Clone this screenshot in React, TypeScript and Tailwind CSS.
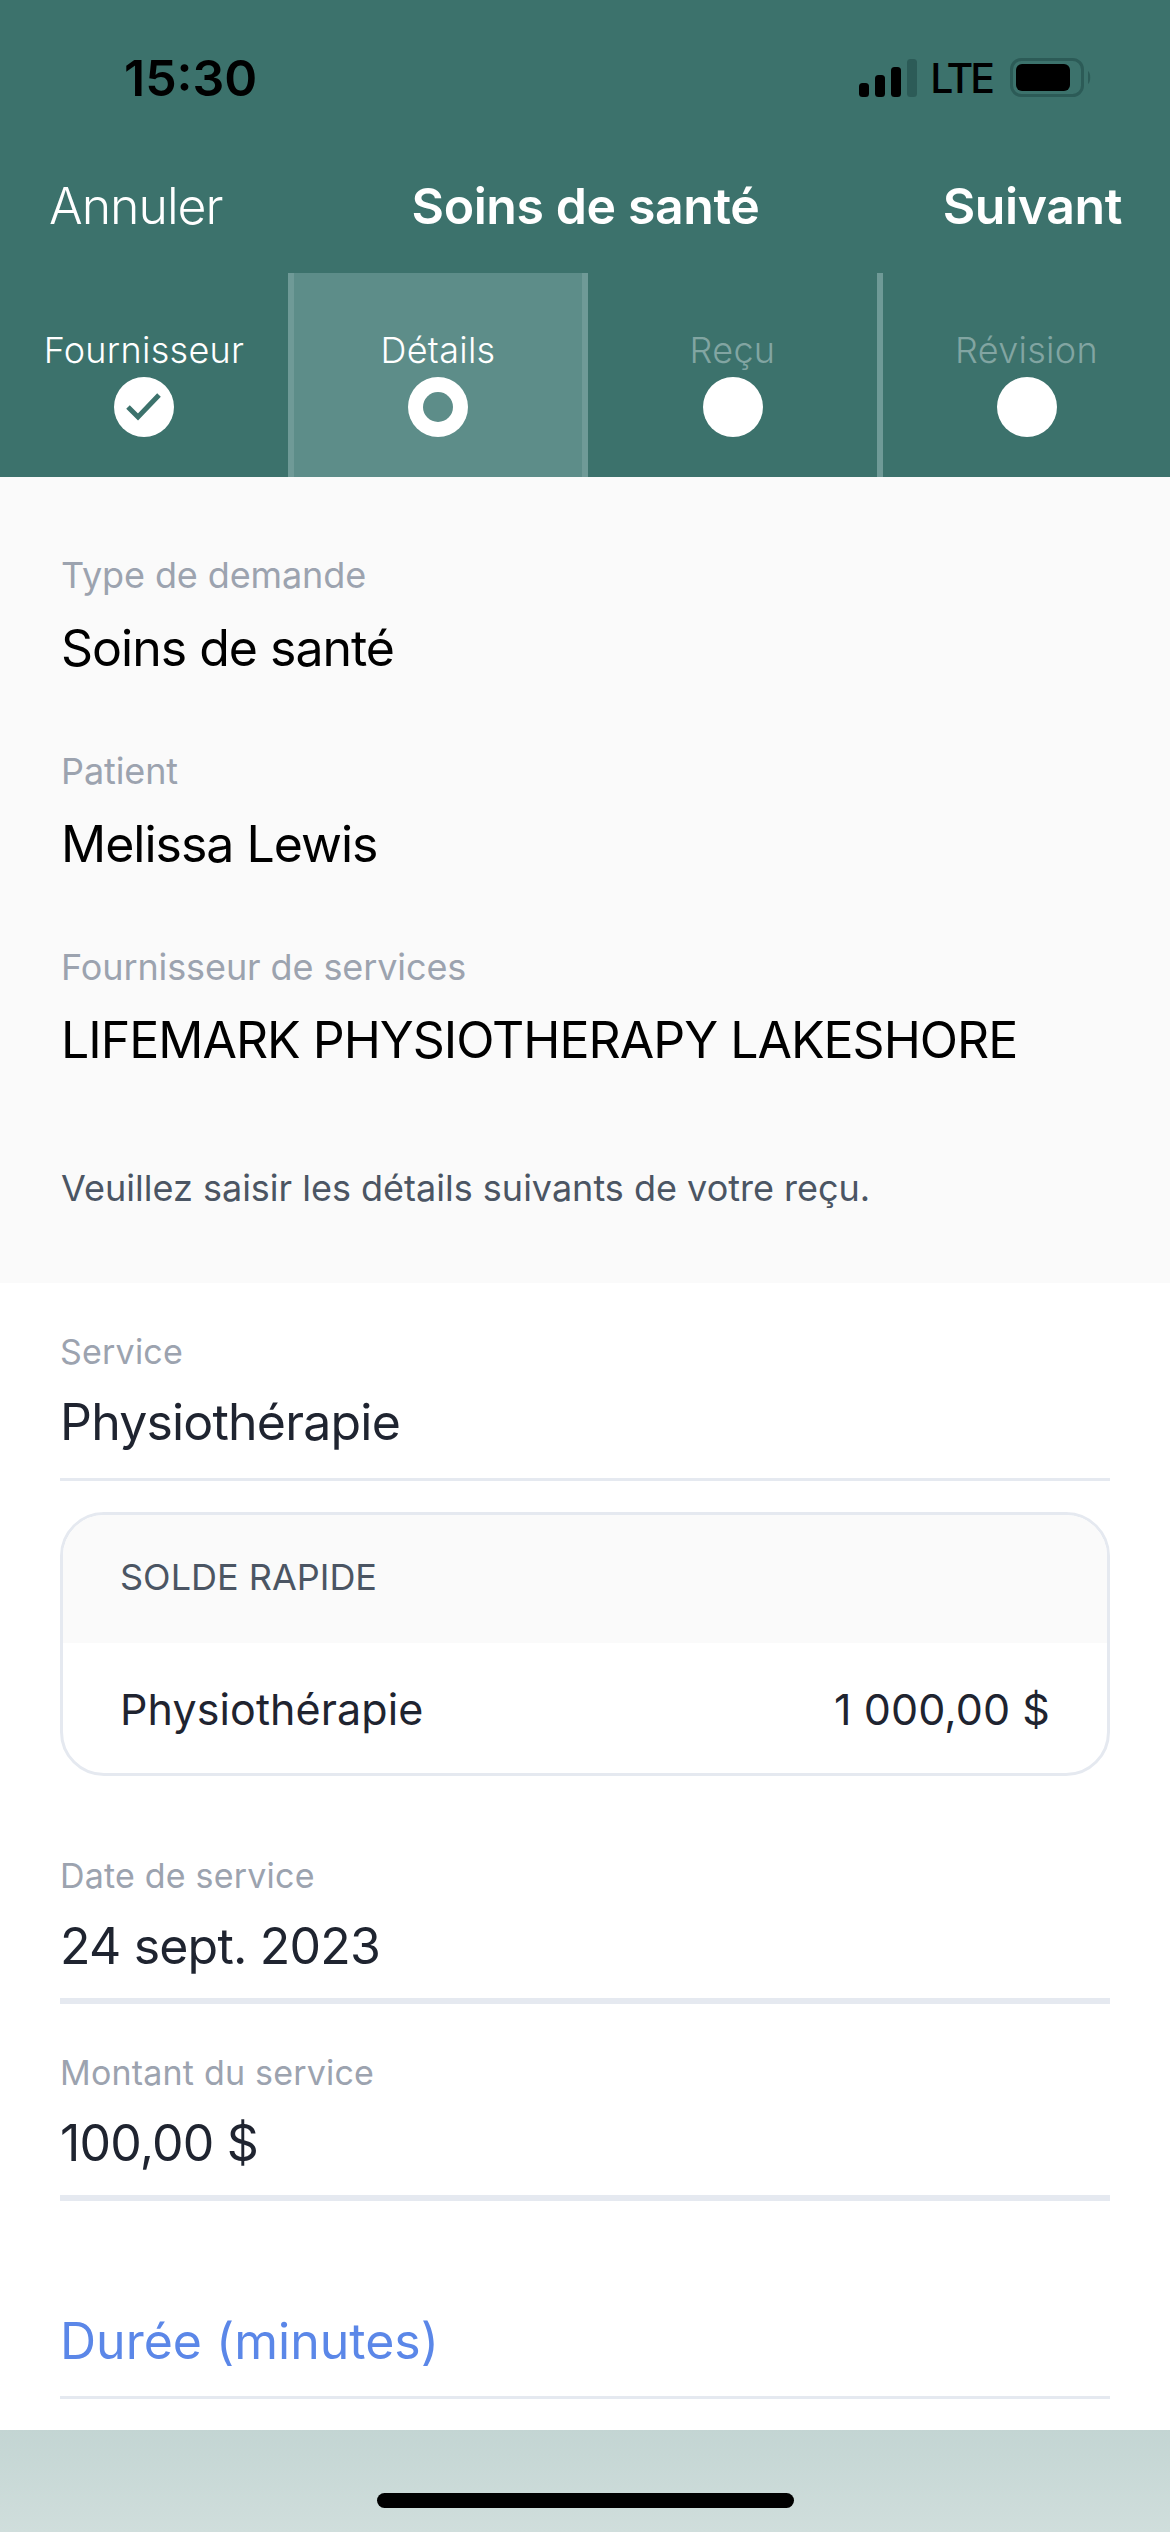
import React from 'react';

const steps = [
  { label: 'Fournisseur', state: 'done' },
  { label: 'Détails', state: 'active' },
  { label: 'Reçu', state: 'todo' },
  { label: 'Révision', state: 'todo' },
];

function StepDot({ state }: { state: string }) {
  return (
    <div className="mt-[6px] flex h-[60px] w-[60px] items-center justify-center rounded-full bg-white">
      {state === 'done' && (
        <svg width="36" height="30" viewBox="0 0 36 30" fill="none">
          <path d="M2 15 L12 25 L33 3" stroke="#3c726c" strokeWidth="5" />
        </svg>
      )}
      {state === 'active' && <div className="h-[30px] w-[30px] rounded-full bg-[#5d8d89]" />}
    </div>
  );
}

function StatusIcons() {
  return (
    <div className="flex items-center">
      <svg width="58" height="38" viewBox="0 0 58 38">
        <rect x="0" y="24" width="10" height="14" rx="3.5" fill="#000" />
        <rect x="16" y="16" width="10" height="22" rx="3.5" fill="#000" />
        <rect x="32" y="8" width="10" height="30" rx="3.5" fill="#000" />
        <rect x="48" y="0" width="10" height="38" rx="3.5" fill="#2c5b57" />
      </svg>
      <span className="ml-[13px] text-[41px] leading-none font-medium tracking-[-3px] text-black">LTE</span>
      <svg className="ml-[18px]" width="82" height="40" viewBox="0 0 82 40">
        <rect x="1.5" y="1.5" width="71" height="36" rx="10" fill="none" stroke="#2c5b57" strokeWidth="3" />
        <rect x="6" y="6" width="54" height="27" rx="6" fill="#000" />
        <path d="M78 13 C81 15 81 24 78 26 Z" fill="#2c5b57" />
      </svg>
    </div>
  );
}

function InfoBlock({ label, value }: { label: string; value: string }) {
  return (
    <div className="h-[196px]">
      <p className="text-[36px] leading-[40px] tracking-[-0.1px] text-[#9ca3af]">{label}</p>
      <p className="mt-[23px] text-[50px] leading-[60px] tracking-[-1px] text-black">{value}</p>
    </div>
  );
}

function Field({ label, value, thick }: { label: string; value: string; thick?: boolean }) {
  return (
    <div className={`border-[#e5e9f0] ${thick ? 'border-b-[6px] pb-[22px]' : 'border-b-[3px] pb-[26px]'}`}>
      <p className="text-[34px] leading-[40px] tracking-[0.2px] text-[#9ca3af]">{label}</p>
      <p className="mt-[20px] text-[50px] leading-[60px] tracking-[-0.8px] text-[#1f2430]">{value}</p>
    </div>
  );
}

export default function App() {
  return (
    <div className="flex h-[2532px] w-[1170px] flex-col bg-white font-['Inter',sans-serif]">
      <header className="bg-[#3c726c]">
        <div className="flex h-[156px] items-center justify-between pr-[78px] pl-[124px]">
          <span className="text-[50px] leading-none font-semibold text-black">15:30</span>
          <StatusIcons />
        </div>
        <div className="grid h-[117px] grid-cols-[1fr_auto_1fr] items-start pt-[20px] pr-[48px] pl-[49px] text-white">
          <span className="text-[50px] leading-[60px] font-light tracking-[-1px]">Annuler</span>
          <span className="text-[50px] leading-[60px] font-semibold tracking-[-0.4px]">Soins de santé</span>
          <span className="text-right text-[50px] leading-[60px] font-semibold tracking-[-0.4px]">Suivant</span>
        </div>
        <div className="grid h-[204px] grid-cols-[288px_300px_289px_293px]">
          {steps.map(({ label, state }, index) => (
            <div
              key={label}
              className={`flex flex-col items-center pt-[56px] ${
                state === 'active' ? 'border-x-[6px] border-[#6f9a97] bg-[#5d8d89]' : ''
              } ${index === 3 ? 'border-l-[6px] border-[#6f9a97]' : ''}`}
            >
              <span
                className={`text-[36px] leading-[42px] font-light tracking-[0.3px] ${
                  state === 'todo' ? 'text-[#82a5a2]' : 'text-white'
                }`}
              >
                {label}
              </span>
              <StepDot state={state} />
            </div>
          ))}
        </div>
      </header>

      <main className="flex flex-1 flex-col">
        <section className="h-[806px] bg-[#fafafa] px-[61px] pt-[78px]">
          <InfoBlock label="Type de demande" value="Soins de santé" />
          <InfoBlock label="Patient" value="Melissa Lewis" />
          <InfoBlock label="Fournisseur de services" value="LIFEMARK PHYSIOTHERAPY LAKESHORE" />
          <p className="mt-[23px] text-[36px] leading-[44px] text-[#4b5563]">
            Veuillez saisir les détails suivants de votre reçu.
          </p>
        </section>

        <section className="px-[60px] pt-[49px]">
          <Field label="Service" value="Physiothérapie" />

          <div className="mt-[31px] h-[264px] overflow-hidden rounded-[44px] border-[3px] border-[#e5e9f0]">
            <div className="flex h-[128px] items-center bg-[#fafafa] px-[57px] pb-[4px] text-[36px] text-[#4b5563]">
              SOLDE RAPIDE
            </div>
            <div className="flex h-[130px] items-center justify-between px-[57px] pt-[3px] text-[43px] tracking-[0.1px] text-[#1f2430]">
              <span>Physiothérapie</span>
              <span>1 000,00 $</span>
            </div>
          </div>

          <div className="mt-[80px]">
            <Field label="Date de service" value="24 sept. 2023" thick />
          </div>
          <div className="mt-[49px]">
            <Field label="Montant du service" value="100,00 $" thick />
          </div>

          <div className="mt-[110px] border-b-[3px] border-[#e5e9f0] pb-[25px]">
            <span className="text-[50px] leading-[60px] text-[#5b87e8]">Durée (minutes)</span>
          </div>
        </section>
      </main>

      <footer className="flex h-[102px] items-start justify-center bg-gradient-to-b from-[#c3d5d3] to-[#d0dedc] pt-[63px]">
        <div className="h-[15px] w-[417px] rounded-full bg-black" />
      </footer>
    </div>
  );
}
